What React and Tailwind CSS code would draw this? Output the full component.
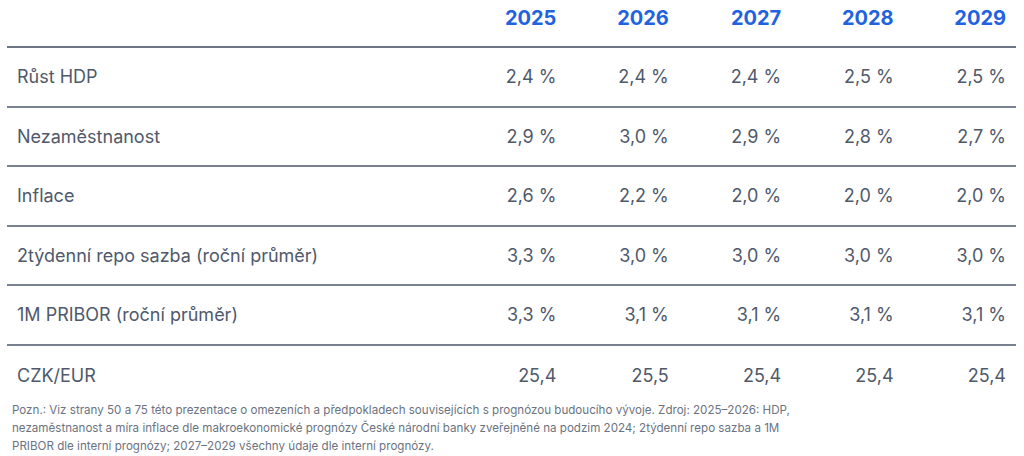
import React from 'react';

const YEARS = ['2025', '2026', '2027', '2028', '2029'];

const ROWS = [
    { label: 'Růst HDP', values: ['2,4 %', '2,4 %', '2,4 %', '2,5 %', '2,5 %'] },
    { label: 'Nezaměstnanost', values: ['2,9 %', '3,0 %', '2,9 %', '2,8 %', '2,7 %'] },
    { label: 'Inflace', values: ['2,6 %', '2,2 %', '2,0 %', '2,0 %', '2,0 %'] },
    { label: '2týdenní repo sazba (roční průměr)', values: ['3,3 %', '3,0 %', '3,0 %', '3,0 %', '3,0 %'] },
    { label: '1M PRIBOR (roční průměr)', values: ['3,3 %', '3,1 %', '3,1 %', '3,1 %', '3,1 %'] },
    { label: 'CZK/EUR', values: ['25,4', '25,5', '25,4', '25,4', '25,4'] }
];

// Macro forecast table
const App = () => {
    return (
        <div className="w-[1024px] h-[456px] bg-white font-['Inter',sans-serif] overflow-hidden">
            <div className="ml-[7px] w-[1009px]">
                {/* Header */}
                <div className="grid grid-cols-[447px_repeat(5,1fr)] h-[48px] border-b-2 border-[#6e7585]">
                    <div></div>
                    {YEARS.map(year => (
                        <div key={year} className="text-right pr-[10px] pt-[5px] text-[20px] leading-[26px] font-bold text-[#1f63e0]">
                            {year}
                        </div>
                    ))}
                </div>

                {/* Rows */}
                {ROWS.map((row, i) => (
                    <div
                        key={row.label}
                        className={`grid grid-cols-[447px_repeat(5,1fr)] items-center h-[59.5px] ${i < ROWS.length - 1 ? 'border-b-2 border-[#7a8190]' : ''}`}
                    >
                        <div className="pl-[10px] text-[18px] text-[#4f596b]">{row.label}</div>
                        {row.values.map((v, j) => (
                            <div key={j} className="text-right pr-[10px] text-[18px] text-[#4f596b]">
                                {v}
                            </div>
                        ))}
                    </div>
                ))}
            </div>

            {/* Footnote */}
            <p className="ml-[12px] mt-[-4px] w-[800px] text-[11.6px] leading-[18px] text-[#6b7280]">
                Pozn.: Viz strany 50 a 75 této prezentace o omezeních a předpokladech souvisejících s prognózou budoucího vývoje. Zdroj: 2025–2026: HDP, nezaměstnanost a míra inflace dle makroekonomické prognózy České národní banky zveřejněné na podzim 2024; 2týdenní repo sazba a 1M PRIBOR dle interní prognózy; 2027–2029 všechny údaje dle interní prognózy.
            </p>
        </div>
    );
};

export default App;
